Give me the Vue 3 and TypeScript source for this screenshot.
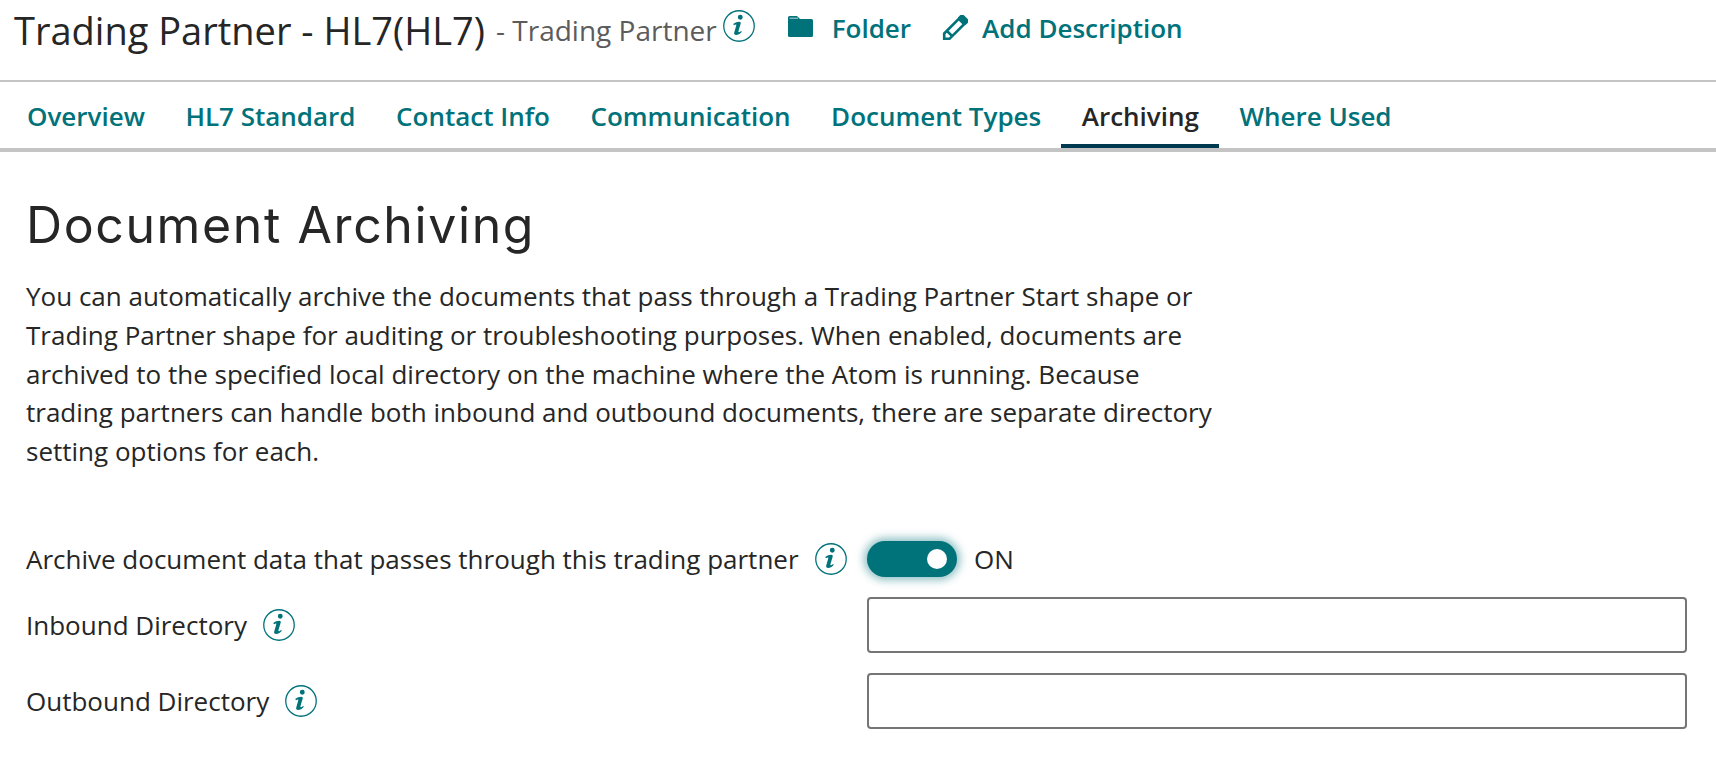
<script setup lang="ts">
const tabs = ['Overview', 'HL7 Standard', 'Contact Info', 'Communication', 'Document Types', 'Archiving', 'Where Used']
const activeTab = 'Archiving'
const infoPath = 'M13.900 6.800a2.300 2.300 0 1 1 4.600 0 2.300 2.300 0 0 1-4.600 0zM9.600 13.200c2-1.500 3.800-2.200 5.600-2.200 1.200 0 1.700.8 1.300 2.100l-2 6.700c-.2.700 0 1 .4 1 .6 0 1.200-.4 2-1.200l.8.900c-1.800 2-3.600 3-5.400 3-1.600 0-2.200-1-1.700-2.600l1.800-6.400c.2-.7.1-1-.3-1-.5 0-1.100.3-1.800.9z'
</script>

<template>
	<div class="page">
		<header class="titleBar">
			<h1>Trading Partner - HL7(HL7)</h1>
			<span class="subtitle">- Trading Partner</span>
			<svg class="info titleInfo" viewBox="0 0 30 30"><circle cx="15" cy="15" r="14.300" /><path :d="infoPath" /></svg>
			<a class="action folder">
				<svg viewBox="0 0 25 21" width="25" height="21">
					<path d="M0 1.500Q0 0 1.500 0H9l3 3h11.500Q25 3 25 4.500v15q0 1.500-1.500 1.500h-22Q0 21 0 19.500z" fill="#00727a" />
					<path d="M1.500 2.200h8.500" stroke="#fff" stroke-width="0.900" opacity="0.800" />
				</svg>
				Folder
			</a>
			<a class="action">
				<svg viewBox="0 0 26 26" width="26" height="26" fill="none" stroke="#00727a" stroke-width="2.600">
					<path d="M2.200 18.500 16.800 3.900l5.300 5.300L7.500 23.800H2.200zM5 16l5.200 5.200" />
					<path d="M17.800 2.400l1.200-1.200c.6-.6 1.400-.6 2 0l3.800 3.800c.6.600.6 1.400 0 2l-1.200 1.200z" fill="#00727a" />
				</svg>
				Add Description
			</a>
		</header>

		<nav class="tabs">
			<a v-for="tab in tabs" :key="tab" :class="{ active: tab === activeTab }">{{ tab }}</a>
		</nav>

		<main class="content">
			<h2>Document Archiving</h2>
			<p>You can automatically archive the documents that pass through a Trading Partner Start shape or Trading Partner shape for auditing or troubleshooting purposes. When enabled, documents are archived to the specified local directory on the machine where the Atom is running. Because trading partners can handle both inbound and outbound documents, there are separate directory setting options for each.</p>

			<div class="form">
				<label>
					Archive document data that passes through this trading partner
					<svg class="info" viewBox="0 0 30 30"><circle cx="15" cy="15" r="14.300" /><path :d="infoPath" /></svg>
				</label>
				<div class="toggleWrap">
					<span class="toggle"><span class="knob"></span></span>
					<span>ON</span>
				</div>
				<label>
					Inbound Directory
					<svg class="info" viewBox="0 0 30 30"><circle cx="15" cy="15" r="14.300" /><path :d="infoPath" /></svg>
				</label>
				<input type="text" />
				<label>
					Outbound Directory
					<svg class="info" viewBox="0 0 30 30"><circle cx="15" cy="15" r="14.300" /><path :d="infoPath" /></svg>
				</label>
				<input type="text" />
			</div>
		</main>
	</div>
</template>

<style>
	html, body {
		background: #fff;
	}
</style>

<style scoped>
	.page {
		width: 1716px;
		height: 784px;
		overflow: hidden;
		font-family: "Open Sans", sans-serif;
		color: #262626;
	}
	.titleBar {
		display: flex;
		align-items: flex-start;
		height: 80px;
		padding-left: 14px;
		border-bottom: 2px solid #c4c4c4;
	}
	h1 {
		margin: 6px 0 0;
		font-size: 38px;
		line-height: 49px;
		font-weight: 400;
	}
	.subtitle {
		margin: 12px 0 0 11px;
		font-size: 28px;
		line-height: 36px;
		color: #5c5c5c;
	}
	.info {
		width: 32px;
		height: 32px;
		flex-shrink: 0;
	}
	.info circle {
		fill: none;
		stroke: #00727a;
		stroke-width: 1.200;
	}
	.info path {
		fill: #00727a;
	}
	.titleInfo {
		margin: 10px 0 0 6px;
	}
	.action {
		display: flex;
		align-items: center;
		gap: 14px;
		margin: 11px 0 0 31px;
		height: 34px;
		font-size: 26px;
		font-weight: 600;
		color: #00727a;
	}
	.folder {
		gap: 19px;
		margin-left: 33px;
	}
	.folder svg {
		margin-top: -3px;
	}
	.tabs {
		display: flex;
		height: 66px;
		padding-left: 6.750px;
		border-bottom: 4px solid #c4c4c4;
	}
	.tabs a {
		padding: 16px 20.250px 0;
		height: 66px;
		box-sizing: border-box;
		font-size: 26px;
		line-height: 36px;
		font-weight: 600;
		color: #00727a;
	}
	.tabs a.active {
		color: #262626;
		border-bottom: 4px solid #003a50;
	}
	.content {
		padding: 40px 26px 0;
	}
	h2 {
		margin: 0;
		font-family: Inter, sans-serif;
		font-size: 50px;
		line-height: 66px;
		font-weight: 400;
		letter-spacing: 1.600px;
	}
	p {
		margin: 19px 0 0;
		width: 1195px;
		font-size: 26px;
		line-height: 38.800px;
	}
	.form {
		display: grid;
		grid-template-columns: 841px 820px;
		grid-template-rows: 36px 56px 56px;
		row-gap: 20px;
		margin-top: 70px;
		align-items: center;
		font-size: 26px;
	}
	label {
		display: flex;
		align-items: center;
		gap: 16px;
	}
	.toggleWrap {
		display: flex;
		align-items: center;
		gap: 17px;
	}
	.toggle {
		display: flex;
		align-items: center;
		justify-content: flex-end;
		width: 90px;
		height: 36px;
		padding-right: 10px;
		box-sizing: border-box;
		border-radius: 18px;
		background: #00727a;
		box-shadow: 0 0 8px 3px rgba(0, 114, 122, 0.45);
	}
	.knob {
		width: 20px;
		height: 20px;
		border-radius: 50%;
		background: #fff;
	}
	input {
		box-sizing: border-box;
		width: 820px;
		height: 56px;
		border: 2px solid #757575;
		border-radius: 4px;
		background: #fff;
	}
</style>
